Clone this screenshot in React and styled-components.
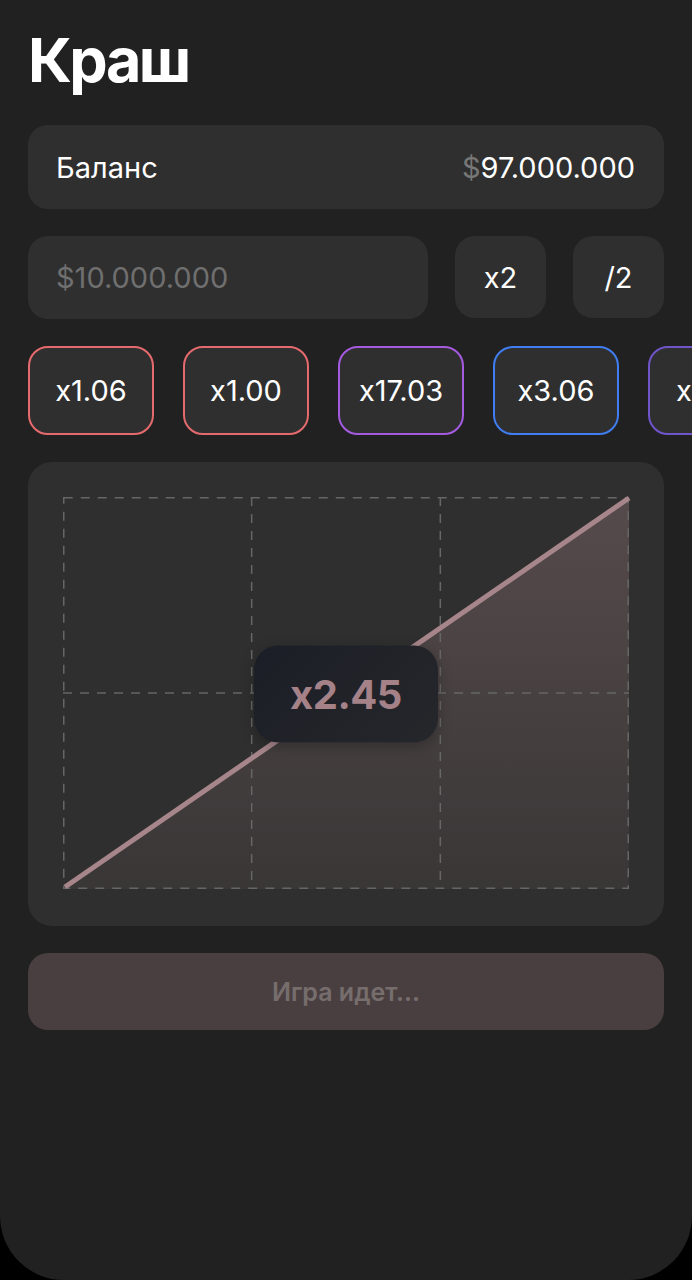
import React from "react";
import styled, { createGlobalStyle } from "styled-components";

const Global = createGlobalStyle`
  html, body { margin: 0; padding: 0; background: #000; }
  body { font-family: Inter, "Noto Sans", sans-serif; -webkit-font-smoothing: antialiased; }
  * { box-sizing: border-box; }
`;

const Screen = styled.div`
  width: 692px;
  height: 1280px;
  background: #212121;
  border-radius: 0 0 64px 64px;
  padding: 24px 28px 0;
  overflow: hidden;
  display: flex;
  flex-direction: column;
`;

const Title = styled.h1`
  margin: 0 0 29px;
  font-size: 61px;
  line-height: 72px;
  font-weight: 700;
  color: #fff;
  letter-spacing: -2.5px;
`;

const Stack = styled.div`
  display: flex;
  flex-direction: column;
  gap: 27px;
`;

const Card = styled.div`
  background: #2f2f2f;
  border-radius: 20px;
`;

const BalanceCard = styled(Card)`
  height: 84px;
  display: flex;
  align-items: center;
  justify-content: space-between;
  padding: 0 29px 0 28px;
  font-size: 29px;
  color: #fff;
`;

const Dollar = styled.span`
  color: #777;
`;

const BetRow = styled.div`
  display: flex;
  gap: 27px;
  height: 83px;
`;

const Input = styled(Card)`
  flex: 1;
  display: flex;
  align-items: center;
  padding: 0 28px;
  font-size: 29px;
  color: #6f6f6f;
`;

const SmallButton = styled(Card)`
  width: 91px;
  height: 82px;
  display: flex;
  align-items: center;
  justify-content: center;
  font-size: 29px;
  color: #fff;
`;

const ChipRow = styled.div`
  display: flex;
  gap: 29px;
  margin-right: -28px;
  overflow: hidden;
`;

const Chip = styled.div`
  flex: 0 0 126px;
  height: 89px;
  border: 2px solid ${(p) => p.$color};
  border-radius: 20px;
  background: #2f2f2f;
  display: flex;
  align-items: center;
  justify-content: center;
  font-size: 29px;
  color: #fff;
`;

const ChartCard = styled(Card)`
  position: relative;
  height: 464px;
  border-radius: 24px;
  padding: 35px 35px 37px 35px;
`;

const ChartSvg = styled.svg`
  display: block;
  width: 566px;
  height: 392px;
  overflow: visible;
`;

const Badge = styled.div`
  position: absolute;
  left: 50%;
  top: 50%;
  transform: translate(-50%, -50%);
  width: 184px;
  height: 97px;
  border-radius: 24px;
  background: linear-gradient(135deg, #1b1e26, #26272b);
  box-shadow: 0 4px 14px rgba(0, 0, 0, 0.25);
  display: flex;
  align-items: center;
  justify-content: center;
  font-size: 40px;
  font-weight: 700;
  color: #a58188;
  letter-spacing: -0.5px;
`;

const PlayButton = styled.div`
  height: 77px;
  border-radius: 20px;
  background: #4a3f40;
  display: flex;
  align-items: center;
  justify-content: center;
  font-size: 25px;
  font-weight: 600;
  color: #766d6d;
`;

const chips = [
  { v: "x1.06", c: "#e56a6e" },
  { v: "x1.00", c: "#e56a6e" },
  { v: "x17.03", c: "#a45be0" },
  { v: "x3.06", c: "#3f7df0" },
  { v: "x2.14", c: "#6f55c9" },
];

const W = 566;
const H = 392;
const dash = "9 8";

export default function App() {
  return (
    <>
      <Global />
      <Screen>
        <Title>Краш</Title>
        <Stack>
          <BalanceCard>
            <span>Баланс</span>
            <span>
              <Dollar>$</Dollar>97.000.000
            </span>
          </BalanceCard>
          <BetRow>
            <Input>$10.000.000</Input>
            <SmallButton>x2</SmallButton>
            <SmallButton>/2</SmallButton>
          </BetRow>
          <ChipRow>
            {chips.map((ch, i) => (
              <Chip key={i} $color={ch.c}>
                {ch.v}
              </Chip>
            ))}
          </ChipRow>
          <ChartCard>
            <ChartSvg viewBox={`0 0 ${W} ${H}`}>
              <defs>
                <linearGradient id="fill" x1="0" y1="0" x2="0" y2="1">
                  <stop offset="0" stopColor="#b08a8f" stopOpacity="0.3" />
                  <stop offset="1" stopColor="#b08a8f" stopOpacity="0.08" />
                </linearGradient>
              </defs>
              <polygon points={`2,390 ${W},1 ${W},${H} 2,${H}`} fill="url(#fill)" />
              <g stroke="#666" strokeWidth="1.5" strokeDasharray={dash} fill="none">
                <rect x="0.75" y="0.75" width={W - 1.5} height={H - 1.5} />
                <line x1={W / 3} y1="0" x2={W / 3} y2={H} />
                <line x1={(2 * W) / 3} y1="0" x2={(2 * W) / 3} y2={H} />
                <line x1="0" y1={H / 2} x2={W} y2={H / 2} />
              </g>
              <line x1="2" y1="390" x2={W} y2="1" stroke="#a7868b" strokeWidth="5" />
            </ChartSvg>
            <Badge>x2.45</Badge>
          </ChartCard>
          <PlayButton>Игра идет...</PlayButton>
        </Stack>
      </Screen>
    </>
  );
}
